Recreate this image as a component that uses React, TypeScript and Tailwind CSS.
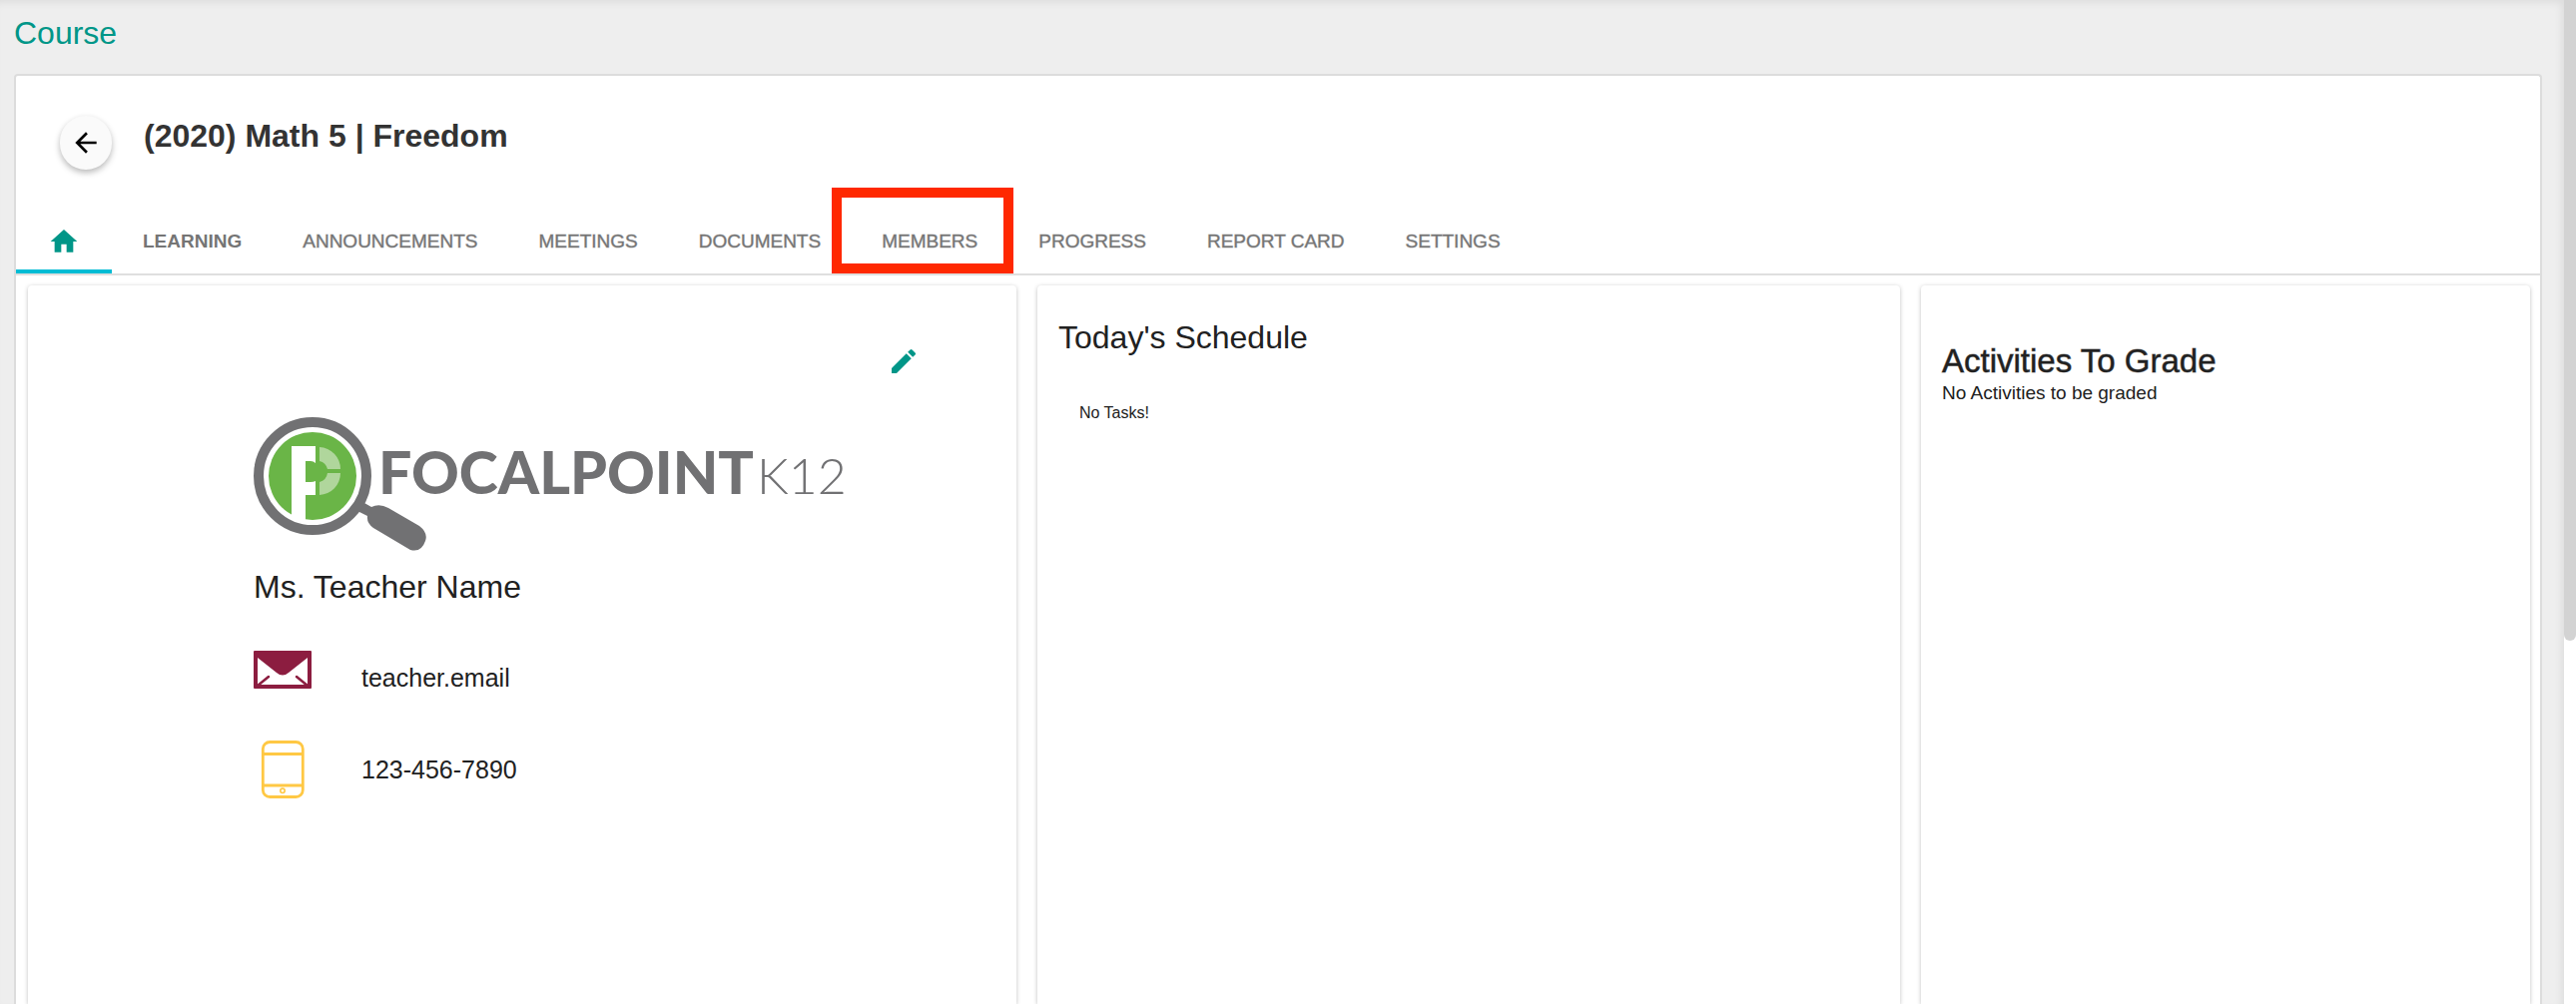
import { useState } from "react";
import { MdArrowBack, MdEdit, MdHome } from "react-icons/md";

const tabs = [
  "LEARNING",
  "ANNOUNCEMENTS",
  "MEETINGS",
  "DOCUMENTS",
  "MEMBERS",
  "PROGRESS",
  "REPORT CARD",
  "SETTINGS",
];

function Logo() {
  return (
    <svg
      role="img"
      aria-label="FocalPoint K12"
      viewBox="0 0 600 134"
      className="h-[134px] w-[600px] max-w-full"
    >
      <path
        d="M111 86 L118 90 Q126 86 135 91 L166 109 Q175 116 172 124 Q168 136 157 133 L120 111 Q113 106 114 99 L104 94 Z"
        fill="#717173"
      />
      <circle cx="59" cy="59" r="54" fill="#fff" stroke="#717173" strokeWidth="10" />
      <circle cx="59" cy="59" r="44" fill="#6ab547" />
      <path
        d="M38 29 H62 V46 Q60 44 57 44 H52 V65 H57 Q60 65 62 64 V78 H52 V104 H44 L38 99 Z"
        fill="#fff"
      />
      <path d="M66 30 A22 22 0 0 1 87 52 H74 A11 11 0 0 0 66 44 Z" fill="#b0d69c" />
      <path d="M66 78 A22 22 0 0 0 87 56 H74 A11 11 0 0 1 66 65 Z" fill="#b0d69c" />
      <text
        x="125"
        y="77"
        fill="#717173"
        className="font-['Lato',sans-serif] text-[59px] font-black"
      >
        FOCALPOINT
      </text>
      <text
        x="504"
        y="77"
        fill="#717173"
        className="font-['Lato',sans-serif] text-[50px] font-light"
      >
        K12
      </text>
    </svg>
  );
}

function MailIcon() {
  return (
    <svg aria-hidden="true" viewBox="0 0 58 40" className="h-10 w-[58px] self-start">
      <rect y="2" width="58" height="38" rx="1" fill="#8c1d40" />
      <path d="M4 9 L23 24 Q29 29 35 24 L54 9 V36 H4 Z" fill="#fff" />
      <path
        d="M4 37 L15 28 M54 37 L43 28"
        stroke="#8c1d40"
        strokeWidth="2.5"
        strokeLinecap="round"
      />
    </svg>
  );
}

function PhoneIcon() {
  return (
    <svg
      aria-hidden="true"
      viewBox="0 0 58 58"
      className="h-[58px] w-[58px]"
      fill="none"
      stroke="#ffc844"
      strokeWidth="2.8"
    >
      <rect x="9.3" y="1.5" width="40" height="55" rx="7" />
      <path d="M9 13.5h40M9 45h40" />
      <circle cx="29" cy="50.3" r="2.2" strokeWidth="1.6" />
    </svg>
  );
}

export default function App() {
  const [active, setActive] = useState("HOME");

  return (
    <div className="flex min-h-screen bg-white font-['Liberation_Sans',Arial,sans-serif] text-[#212121]">
      <main className="flex min-w-0 flex-1 flex-col bg-[#eeeeee] pt-[13px] pr-[22px] pl-[14px] shadow-[inset_-4px_4px_8px_-2px_rgba(0,0,0,0.08)]">
        <h2 className="text-[32px] leading-10 text-[#009688]">Course</h2>

        <div className="mt-[21px] flex flex-1 flex-col rounded-t border-2 border-b-0 border-[#dcdcdc] bg-white">
          <header className="flex items-start gap-8 px-11 py-10">
            <button
              type="button"
              aria-label="Back"
              className="flex h-[54px] w-[52px] items-center justify-center rounded-full bg-[#fafafa] text-black shadow-[0_3px_6px_rgba(0,0,0,0.28)]"
            >
              <MdArrowBack className="h-8 w-8" />
            </button>
            <h1 className="text-[32px] leading-10 font-bold text-[#333333]">
              (2020) Math 5 | Freedom
            </h1>
          </header>

          <nav className="flex h-[66px] gap-px border-b-2 border-[#dfdfdf] text-[19px] leading-6 text-[#757575]">
            <button
              type="button"
              aria-label="Home"
              onClick={() => setActive("HOME")}
              className={
                active === "HOME"
                  ? "flex w-24 items-center justify-center border-b-4 border-[#00bcd4] pt-1 text-[#009688]"
                  : "flex w-24 items-center justify-center text-[#009688]"
              }
            >
              <MdHome className="h-8 w-8" />
            </button>
            {tabs.map((tab) => (
              <button
                key={tab}
                type="button"
                onClick={() => setActive(tab)}
                className={
                  tab === "LEARNING"
                    ? "relative px-[30px] font-bold"
                    : "relative px-[30px] [-webkit-text-stroke:1px_#75757566]"
                }
              >
                {tab}
                {tab === "MEMBERS" && (
                  <span className="pointer-events-none absolute -top-[22px] -right-1.5 bottom-0 -left-5 border-[10px] border-[#ff2800]" />
                )}
              </button>
            ))}
          </nav>

          <div className="grid flex-1 grid-cols-[990fr_864fr_610fr] gap-[21px] pt-[10px] pr-[10px] pl-3">
            <section className="rounded-t pt-[60px] pr-[97px] pb-16 pl-[226px] shadow-[0_1px_4px_rgba(0,0,0,0.25)]">
              <div className="flex justify-end">
                <button type="button" aria-label="Edit" className="text-[#009688]">
                  <MdEdit className="h-8 w-8" />
                </button>
              </div>
              <div className="mt-10">
                <Logo />
              </div>
              <h3 className="mt-4 text-[32px] leading-10">Ms. Teacher Name</h3>
              <div className="mt-[42px] flex h-[58px] items-center gap-[50px] text-[25px] leading-8">
                <MailIcon />
                <span>teacher.email</span>
              </div>
              <div className="mt-[34px] flex h-[58px] items-center gap-[50px] text-[25px] leading-8">
                <PhoneIcon />
                <span>123-456-7890</span>
              </div>
            </section>

            <section className="rounded-t px-[21px] pt-8 shadow-[0_1px_4px_rgba(0,0,0,0.25)]">
              <h3 className="text-[32px] leading-10">Today's Schedule</h3>
              <p className="mt-11 px-[21px] text-base">No Tasks!</p>
            </section>

            <section className="rounded-t px-[21px] pt-14 shadow-[0_1px_4px_rgba(0,0,0,0.25)]">
              <h3 className="text-[33px] leading-10 [-webkit-text-stroke:1px_#21212180]">
                Activities To Grade
              </h3>
              <p className="text-[19px] leading-6">No Activities to be graded</p>
            </section>
          </div>
        </div>
      </main>

      {/* scroll track */}
      <div className="w-3 shrink-0">
        <div className="h-[642px] rounded-b-full bg-[#d3d3d3]" />
      </div>
    </div>
  );
}
